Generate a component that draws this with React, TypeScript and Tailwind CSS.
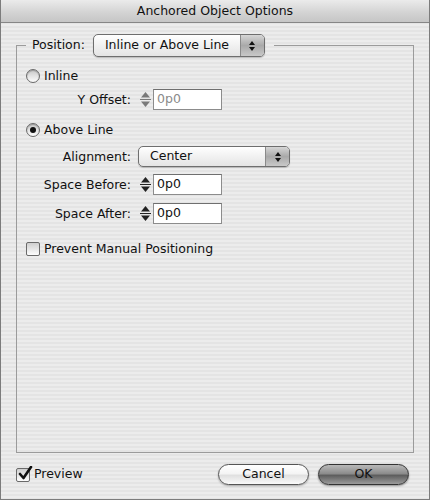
import React from 'react';

const font = { fontFamily: '"DejaVu Sans", "Liberation Sans", sans-serif' };

function Radio({ checked }: { checked?: boolean }) {
  return (
    <span className="w-[14px] h-[14px] rounded-full border border-[#6a6a6a] bg-[linear-gradient(180deg,#c9c9c9,#fdfdfd)] shadow-[inset_0_1px_1px_rgba(0,0,0,0.25)] flex items-center justify-center shrink-0">
      {checked && <span className="w-[6px] h-[6px] rounded-full bg-[#111]" />}
    </span>
  );
}

function Check({ checked }: { checked?: boolean }) {
  return (
    <span className="relative w-[14px] h-[14px] rounded-[2px] border border-[#6a6a6a] bg-[linear-gradient(180deg,#cfcfcf,#fdfdfd)] shrink-0">
      {checked && (
        <svg className="absolute left-[1px] top-[-3px]" width="15" height="15" viewBox="0 0 15 15">
          <path d="M2 8 L5.5 12 L13 1" fill="none" stroke="#111" strokeWidth="2.6" strokeLinecap="round" strokeLinejoin="round" />
        </svg>
      )}
    </span>
  );
}

function Arrows() {
  return (
    <svg width="8" height="12" viewBox="0 0 8 12">
      <path d="M4 1 L7 5 L1 5 Z" fill="#111" />
      <path d="M4 11 L7 7 L1 7 Z" fill="#111" />
    </svg>
  );
}

function Popup({ label, width, height }: { label: string; width: string; height: string }) {
  return (
    <div className={`${width} ${height} flex rounded-[5px] border border-[#6e6e6e] bg-[linear-gradient(180deg,#ffffff,#f1f1f1_50%,#e4e4e4)] shadow-[0_1px_1px_rgba(0,0,0,0.2)] overflow-hidden`}>
      <div className="flex-1 flex items-center pl-[11px] text-[12.5px] text-[#111]">{label}</div>
      <div className="w-[24px] flex items-center justify-center border-l border-[#8a8a8a] bg-[linear-gradient(180deg,#d6d6d6,#a9a9a9_50%,#c8c8c8)]">
        <Arrows />
      </div>
    </div>
  );
}

function Stepper({ disabled }: { disabled?: boolean }) {
  const c = disabled ? '#7a7a7a' : '#222';
  return (
    <div className="flex h-[21px]">
      <div className="w-[15px] flex items-center justify-center">
        <svg width="13" height="19" viewBox="0 0 13 19">
          <path d="M6.5 2 L11 7.5 L2 7.5 Z" fill={c} />
          <line x1="1" y1="9.5" x2="12" y2="9.5" stroke={c} strokeWidth="1" />
          <path d="M6.5 17 L11 11.5 L2 11.5 Z" fill={c} />
        </svg>
      </div>
      <div className={`w-[69px] border border-[#8c8c8c] border-t-[#6f6f6f] bg-white flex items-center pl-[3px] text-[12.5px] ${disabled ? 'text-[#8a8a8a]' : 'text-[#111]'}`}>
        0p0
      </div>
    </div>
  );
}

function FieldRow({ label, children, className }: { label: string; children: React.ReactNode; className?: string }) {
  return (
    <div className={`flex items-center ${className ?? ''}`}>
      <div className="w-[105px] text-right text-[12.5px] leading-[19px] text-[#111]">{label}</div>
      <div className="ml-[7px]">{children}</div>
    </div>
  );
}

export default function App() {
  return (
    <div
      style={font}
      className="w-[430px] h-[500px] flex flex-col border-x border-b border-[#7c7c7c] bg-[repeating-linear-gradient(180deg,#ececec_0px,#ececec_2px,#e4e4e4_2px,#e4e4e4_4px)] overflow-hidden"
    >
      {/* title bar */}
      <div className="h-[23px] shrink-0 flex items-center justify-center border-b border-[#868686] bg-[linear-gradient(180deg,#ebebeb,#d2d2d2_60%,#c6c6c6)] text-[12.5px] text-[#111]">
        Anchored Object Options
      </div>

      <fieldset className="mx-[15px] mt-[11px] h-[419px] border border-[#9b9b9b] pl-[9px]">
        <legend className="flex items-center pl-[6px] pr-[9px]">
          <span className="text-[12.5px] text-[#111] mr-[8px]">Position:</span>
          <Popup label="Inline or Above Line" width="w-[172px]" height="h-[23px]" />
        </legend>

        <div className="flex items-center gap-[4px] mt-[9px] leading-[19px]">
          <Radio />
          <span className="text-[12.5px] text-[#111]">Inline</span>
        </div>

        <FieldRow label="Y Offset:" className="mt-[4px]">
          <Stepper disabled />
        </FieldRow>

        <div className="flex items-center gap-[4px] mt-[10px] leading-[19px]">
          <Radio checked />
          <span className="text-[12.5px] text-[#111]">Above Line</span>
        </div>

        <FieldRow label="Alignment:" className="mt-[7px]">
          <Popup label="Center" width="w-[152px]" height="h-[21px]" />
        </FieldRow>

        <FieldRow label="Space Before:" className="mt-[7px]">
          <Stepper />
        </FieldRow>

        <FieldRow label="Space After:" className="mt-[8px]">
          <Stepper />
        </FieldRow>

        <div className="flex items-center gap-[4px] mt-[15px] leading-[19px]">
          <Check />
          <span className="text-[12.5px] text-[#111]">Prevent Manual Positioning</span>
        </div>
      </fieldset>

      <div className="flex items-center mt-[11px] pl-[15px] pr-[20px]">
        <div className="flex items-center gap-[4px]">
          <Check checked />
          <span className="text-[12.5px] text-[#111]">Preview</span>
        </div>
        <div className="ml-auto flex gap-[9px]">
          <button className="w-[91px] h-[21px] rounded-full border border-[#555] bg-[linear-gradient(180deg,#ffffff,#f4f4f4_45%,#e0e0e0_55%,#fafafa)] text-[12.5px] text-[#111] shadow-[0_1px_2px_rgba(0,0,0,0.3)]">
            Cancel
          </button>
          <button className="w-[91px] h-[21px] rounded-full border border-[#333] bg-[linear-gradient(180deg,#b9b9b9,#8c8c8c_45%,#5e5e5e_55%,#9b9b9b)] text-[12.5px] text-[#111] shadow-[0_1px_2px_rgba(0,0,0,0.4)]">
            OK
          </button>
        </div>
      </div>
    </div>
  );
}
